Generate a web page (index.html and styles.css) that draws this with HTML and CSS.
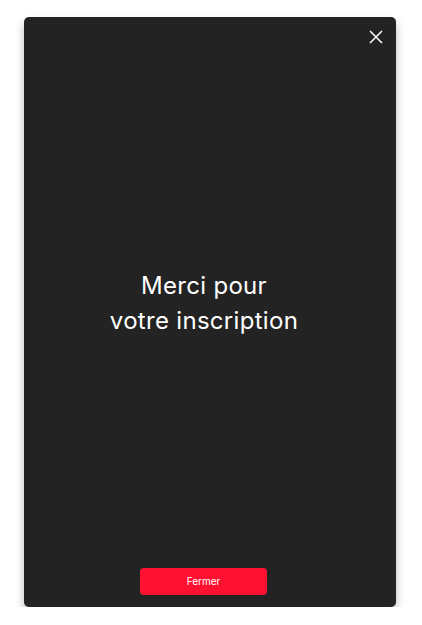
FILE: index.html
```html
<!DOCTYPE html>
<html lang="fr">
<head>
<meta charset="utf-8">
<link rel="stylesheet" href="styles.css">
</head>
<body>
<div class="page">
  <div class="modal">
    <div class="modal-top">
      <button class="close" aria-label="Fermer">
        <svg width="14" height="14" viewBox="0 0 14 14"><path d="M1 1L13 13M13 1L1 13" stroke="#fff" stroke-width="1.5" fill="none"/></svg>
      </button>
    </div>
    <div class="modal-body">
      <p class="message">Merci pour<br>votre inscription</p>
    </div>
    <div class="modal-foot">
      <button class="btn">Fermer</button>
    </div>
  </div>
</div>
</body>
</html>
```
FILE: styles.css
```css
html, body { margin: 0; padding: 0; background: #fff; }
body { font-family: "Inter", "Lato", sans-serif; }
.page { padding: 17px 26px 0 24px; }
.modal {
  width: 372px;
  height: 590px;
  background: #232323;
  border-radius: 5px;
  box-shadow: 0 6px 10px rgba(0,0,0,0.28);
  display: flex;
  flex-direction: column;
}
.modal-top { display: flex; justify-content: flex-end; padding: 13px 13px 0 0; }
.close { background: none; border: 0; padding: 0; width: 14px; height: 14px; display: block; cursor: pointer; }
.close svg { display: block; }
.modal-body { flex: 1; display: flex; align-items: center; justify-content: center; padding: 0 12px 6px 0; }
.message { margin: 0; color: #fff; font-size: 24px; line-height: 35px; text-align: center; font-weight: 400; letter-spacing: 0.3px; }
.modal-foot { display: flex; justify-content: center; padding: 0 13px 12px 0; }
.btn {
  width: 127px; height: 27px;
  background: #ff1231;
  color: #fff;
  border: 0;
  border-radius: 4px;
  font-family: "Inter", sans-serif;
  font-size: 10px;
  line-height: 12px;
  padding: 0 0 2px;
  cursor: pointer;
}
```
